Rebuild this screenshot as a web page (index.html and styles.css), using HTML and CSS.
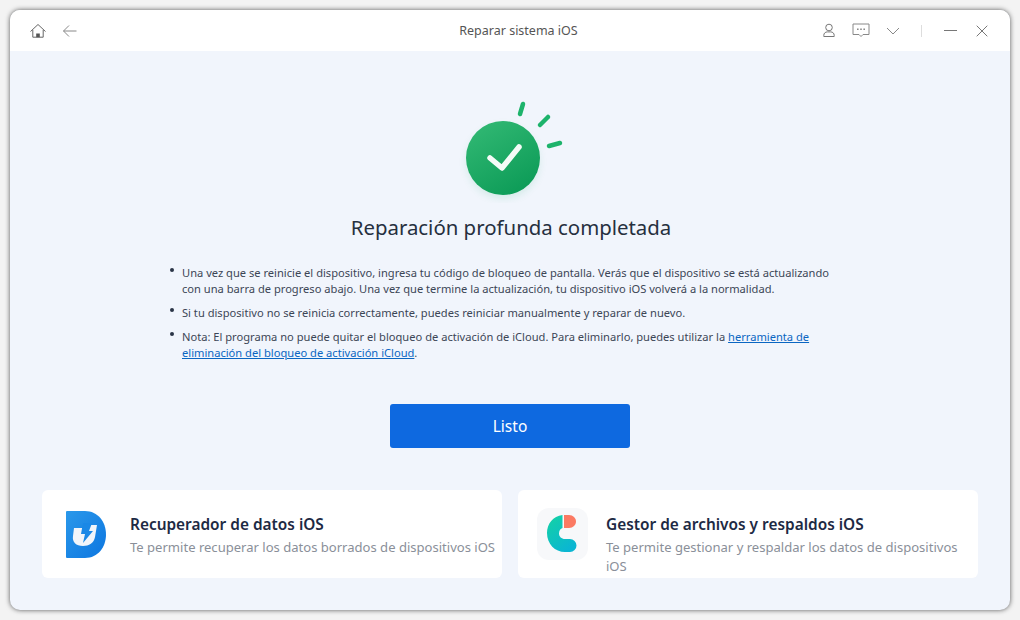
FILE: index.html
```html
<!DOCTYPE html>
<html lang="es">
<head>
    <meta charset="UTF-8">
    <title>Reparar sistema iOS</title>
    <link rel="stylesheet" href="styles.css">
</head>
<body>
    <div class="window">
        <header class="titlebar">
            <div class="title-left">
                <svg class="icon" width="18" height="18" viewBox="0 0 18 18" fill="none" stroke="#666" stroke-width="1">
                    <path d="M1.500 9.500 9 2.500l7.500 7"/>
                    <path d="M3.800 8v7.200h10.400V8"/>
                    <rect x="7.200" y="11.500" width="3.600" height="3.700" fill="#555" stroke="none"/>
                </svg>
                <svg class="icon" width="16" height="14" viewBox="0 0 16 14" fill="none" stroke="#888" stroke-width="1">
                    <path d="M14.500 7H1.500M7 1.500 1.500 7 7 12.500"/>
                </svg>
            </div>
            <div class="title-text">Reparar sistema iOS</div>
            <div class="title-right">
                <svg class="icon" width="14" height="15" viewBox="0 0 14 15" fill="none" stroke="#777" stroke-width="1">
                    <circle cx="7" cy="4.500" r="3.300"/>
                    <path d="M1.800 13.500v-1.200c0-2 1.500-3.400 3.500-3.400h3.400c2 0 3.500 1.400 3.500 3.400v1.200z"/>
                </svg>
                <svg class="icon" width="18" height="15" viewBox="0 0 18 15" fill="none" stroke="#888" stroke-width="1">
                    <path d="M1 1h16v10.500h-6L9 13.500l-2-2H1z"/>
                    <path d="M5 6.300h1.600M8.200 6.300h1.600M11.400 6.300H13" stroke-width="1.500"/>
                </svg>
                <svg class="icon" width="14" height="8" viewBox="0 0 14 8" fill="none" stroke="#888" stroke-width="1">
                    <path d="M1 1l6 6 6-6"/>
                </svg>
                <span class="divider"></span>
                <svg class="icon" width="13" height="3" viewBox="0 0 13 3" fill="none" stroke="#777" stroke-width="1">
                    <path d="M0 1.500h13"/>
                </svg>
                <svg class="icon icon-close" width="12" height="12" viewBox="0 0 12 12" fill="none" stroke="#777" stroke-width="1">
                    <path d="M.7.7l10.600 10.600M11.300.7.7 11.300"/>
                </svg>
            </div>
        </header>

        <main class="content">
            <svg class="success" width="110" height="104" viewBox="0 0 110 104">
                <defs>
                    <linearGradient id="okGrad" x1="0.200" y1="0" x2="0.800" y2="1">
                        <stop offset="0" stop-color="#31b873"/>
                        <stop offset="1" stop-color="#0b9a56"/>
                    </linearGradient>
                    <filter id="okBlur" x="-30%" y="-30%" width="160%" height="160%">
                        <feGaussianBlur stdDeviation="4"/>
                    </filter>
                </defs>
                <circle cx="47" cy="63" r="36" fill="#17a862" opacity="0.14" filter="url(#okBlur)"/>
                <circle cx="47" cy="59" r="37" fill="url(#okGrad)"/>
                <path d="M34 59l12 10 17-21" fill="none" stroke="#f4fbf7" stroke-width="5.500" stroke-linecap="round" stroke-linejoin="round"/>
                <g stroke="#1db36b" stroke-width="4.500" stroke-linecap="round">
                    <path d="M67 5l-3 10"/>
                    <path d="M92 18l-8 8"/>
                    <path d="M104 44l-11 3"/>
                </g>
            </svg>
            <h1>Reparación profunda completada</h1>
            <ul class="notes">
                <li>Una vez que se reinicie el dispositivo, ingresa tu código de bloqueo de pantalla. Verás que el dispositivo se está actualizando con una barra de progreso abajo. Una vez que termine la actualización, tu dispositivo iOS volverá a la normalidad.</li>
                <li>Si tu dispositivo no se reinicia correctamente, puedes reiniciar manualmente y reparar de nuevo.</li>
                <li>Nota: El programa no puede quitar el bloqueo de activación de iCloud. Para eliminarlo, puedes utilizar la <a href="#">herramienta de eliminación del bloqueo de activación iCloud</a>.</li>
            </ul>
            <button class="done">Listo</button>
            <div class="cards">
                <div class="card">
                    <svg class="card-icon" width="60" height="60" viewBox="0 0 60 60">
                        <defs>
                            <linearGradient id="dGrad" x1="0" y1="0" x2="1" y2="1">
                                <stop offset="0" stop-color="#2a98ea"/>
                                <stop offset="1" stop-color="#0d76e0"/>
                            </linearGradient>
                        </defs>
                        <path d="M9 7h18c13 0 21 11 21 23.500S40 54 27 54H9a1 1 0 0 1-1-1V8a1 1 0 0 1 1-1z" fill="url(#dGrad)"/>
                        <path d="M16 24h9l3 0 3-3h8l-2 12c-1 6-6 9-12 9-7 0-11-4-10-10z" fill="#f1f5fa"/>
                        <path d="M25 19h9l-3 8h4L25 39l2-9h-4z" fill="#1a88e6"/>
                    </svg>
                    <div class="card-text">
                        <h2>Recuperador de datos iOS</h2>
                        <p>Te permite recuperar los datos borrados de dispositivos iOS</p>
                    </div>
                </div>
                <div class="card">
                    <svg class="card-icon" width="60" height="60" viewBox="0 0 60 60">
                        <defs>
                            <linearGradient id="cGrad" x1="0" y1="0" x2="0.600" y2="1">
                                <stop offset="0" stop-color="#14d3a3"/>
                                <stop offset="1" stop-color="#0bb6d2"/>
                            </linearGradient>
                        </defs>
                        <rect x="3" y="4" width="51" height="52" rx="12" fill="#f7f8fa"/>
                        <path d="M28.500 11C19 12 13 20 13 29c0 11 8 19 18 19h5a6.500 6.500 0 0 0 0-13h-5c-3.500 0-6-2.500-6-5.500s1.500-5 3.500-5.500z" fill="url(#cGrad)"/>
                        <path d="M30 11h5c4 0 7 3 7 6.500S39 24 35 24h-5z" fill="#fb7a63"/>
                    </svg>
                    <div class="card-text">
                        <h2>Gestor de archivos y respaldos iOS</h2>
                        <p>Te permite gestionar y respaldar los datos de dispositivos iOS</p>
                    </div>
                </div>
            </div>
        </main>
    </div>
</body>
</html>
```

FILE: styles.css
```css
* {
    box-sizing: border-box;
}
body {
    margin: 0;
    padding: 10px;
    height: 620px;
    overflow: hidden;
    background: #f3f3f3;
    font-family: "Noto Sans", "Open Sans", sans-serif;
}
.window {
    width: 1000px;
    height: 600px;
    border-radius: 10px;
    overflow: hidden;
    background: #f1f5fc;
    box-shadow: 0 0 5px rgba(0,0,0,0.65);
    display: flex;
    flex-direction: column;
}
.titlebar {
    height: 41px;
    flex: none;
    background: white;
    display: flex;
    align-items: center;
    justify-content: space-between;
    padding: 0 22px 0 19px;
    position: relative;
}
.title-left, .title-right {
    display: flex;
    align-items: center;
}
.title-left {
    gap: 15px;
}
.title-right {
    gap: 16px;
}
.icon {
    display: block;
}
.icon-close {
    margin-left: 3.500px;
}
.title-text {
    font-size: 12.500px;
    color: #555;
    position: absolute;
    left: 0;
    right: 0;
    text-align: center;
    pointer-events: none;
    padding-left: 17px;
}
.divider {
    width: 1px;
    height: 12px;
    background: #ddd;
    margin: 0 6px 0 5px;
}
.content {
    flex: 1;
    display: flex;
    flex-direction: column;
    align-items: center;
    padding-top: 48px;
}
.success {
    margin-left: 2px;
    display: block;
    flex: none;
}
h1 {
    margin: 11px 0 0 2px;
    font-size: 20.400px;
    line-height: 27px;
    font-weight: 400;
    color: #26303f;
}
.notes {
    list-style: none;
    margin: 24px 0 0 4px;
    padding: 0;
    width: 660px;
    font-size: 11.140px;
    line-height: 16px;
    color: #3c4656;
}
.notes li {
    margin-bottom: 8px;
    position: relative;
}
.notes li::before {
    content: "";
    position: absolute;
    left: -12.500px;
    top: 3px;
    width: 4px;
    height: 4px;
    border-radius: 50%;
    background: #2a3446;
}
.notes a {
    color: #0a66c2;
}
.done {
    margin-top: 34.500px;
    width: 240px;
    height: 44px;
    flex: none;
    border: none;
    border-radius: 3px;
    background: #0e69e0;
    color: white;
    font-family: inherit;
    font-size: 15.500px;
}
.cards {
    margin-top: 42px;
    display: flex;
    gap: 16px;
    padding: 0 32px;
    width: 100%;
}
.card {
    flex: 1;
    height: 88px;
    background: white;
    border-radius: 6px;
    display: flex;
    align-items: flex-start;
    padding: 14px 6px 0 16px;
    gap: 12px;
}
.card-icon {
    flex: none;
}
.card-text {
    margin-top: 11px;
}
.card-text h2 {
    margin: 0;
    font-size: 15.400px;
    line-height: 20px;
    font-weight: 600;
    color: #1d2a44;
}
.card-text p {
    margin: 3.500px 0 0;
    font-size: 13.050px;
    line-height: 19px;
    color: #8a8f99;
}
```
